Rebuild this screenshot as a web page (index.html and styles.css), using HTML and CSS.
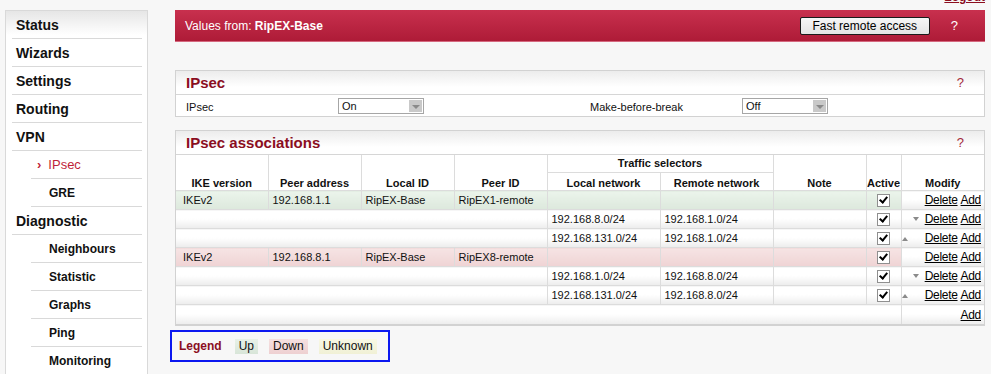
FILE: index.html
```html
<!DOCTYPE html>
<html>
<head>
    <title>IPsec</title>
    <link rel="stylesheet" href="styles.css">
</head>
<body>
<div class="page">
    <div class="menu">
        <div class="menu-item">Status</div>
        <div class="menu-item">Wizards</div>
        <div class="menu-item">Settings</div>
        <div class="menu-item">Routing</div>
        <div class="menu-item">VPN</div>
        <div class="menu-item sub active"><span class="chev">&#8250;</span>IPsec</div>
        <div class="menu-item sub">GRE</div>
        <div class="menu-item">Diagnostic</div>
        <div class="menu-item sub">Neighbours</div>
        <div class="menu-item sub">Statistic</div>
        <div class="menu-item sub">Graphs</div>
        <div class="menu-item sub">Ping</div>
        <div class="menu-item sub">Monitoring</div>
    </div>

    <div class="main">
        <div class="logout-row"><a class="logout" href="#">Logout</a></div>

        <div class="topbar">
            <span class="values">Values from: <b>RipEX-Base</b></span>
            <button class="fast-btn">Fast remote access</button>
            <span class="help-white">?</span>
        </div>

        <div class="panel first">
            <div class="panel-head">
                <span class="panel-title">IPsec</span>
                <span class="help">?</span>
            </div>
            <div class="form-row">
                <label>IPsec</label>
                <div class="select"><span>On</span><span class="sel-arrow"></span></div>
                <label>Make-before-break</label>
                <div class="select"><span>Off</span><span class="sel-arrow"></span></div>
            </div>
        </div>

        <div class="panel">
            <div class="panel-head">
                <span class="panel-title">IPsec associations</span>
                <span class="help">?</span>
            </div>
            <table class="assoc">
                <colgroup>
                    <col style="width:92px">
                    <col style="width:93px">
                    <col style="width:93px">
                    <col style="width:93px">
                    <col style="width:113px">
                    <col style="width:113px">
                    <col style="width:93px">
                    <col style="width:35px">
                    <col style="width:83px">
                </colgroup>
                <tr class="head">
                    <th rowspan="2">IKE version</th>
                    <th rowspan="2">Peer address</th>
                    <th rowspan="2">Local ID</th>
                    <th rowspan="2">Peer ID</th>
                    <th colspan="2" class="mid">Traffic selectors</th>
                    <th rowspan="2">Note</th>
                    <th rowspan="2">Active</th>
                    <th rowspan="2">Modify</th>
                </tr>
                <tr class="head">
                    <th>Local network</th>
                    <th>Remote network</th>
                </tr>
                <tr class="up">
                    <td class="first-col">IKEv2</td>
                    <td>192.168.1.1</td>
                    <td>RipEX-Base</td>
                    <td>RipEX1-remote</td>
                    <td></td>
                    <td></td>
                    <td></td>
                    <td class="act"><span class="cb"></span></td>
                    <td class="mod"><div class="mod-in"><a href="#">Delete</a> <a href="#">Add</a></div></td>
                </tr>
                <tr>
                    <td colspan="4"></td>
                    <td>192.168.8.0/24</td>
                    <td>192.168.1.0/24</td>
                    <td></td>
                    <td class="act"><span class="cb"></span></td>
                    <td class="mod"><div class="mod-in"><span class="arrow down"></span><a href="#">Delete</a> <a href="#">Add</a></div></td>
                </tr>
                <tr>
                    <td colspan="4"></td>
                    <td>192.168.131.0/24</td>
                    <td>192.168.1.0/24</td>
                    <td></td>
                    <td class="act"><span class="cb"></span></td>
                    <td class="mod"><div class="mod-in"><span class="arrow up"></span><a href="#">Delete</a> <a href="#">Add</a></div></td>
                </tr>
                <tr class="down">
                    <td class="first-col">IKEv2</td>
                    <td>192.168.8.1</td>
                    <td>RipEX-Base</td>
                    <td>RipEX8-remote</td>
                    <td></td>
                    <td></td>
                    <td></td>
                    <td class="act"><span class="cb"></span></td>
                    <td class="mod"><div class="mod-in"><a href="#">Delete</a> <a href="#">Add</a></div></td>
                </tr>
                <tr>
                    <td colspan="4"></td>
                    <td>192.168.1.0/24</td>
                    <td>192.168.8.0/24</td>
                    <td></td>
                    <td class="act"><span class="cb"></span></td>
                    <td class="mod"><div class="mod-in"><span class="arrow down"></span><a href="#">Delete</a> <a href="#">Add</a></div></td>
                </tr>
                <tr>
                    <td colspan="4"></td>
                    <td>192.168.131.0/24</td>
                    <td>192.168.8.0/24</td>
                    <td></td>
                    <td class="act"><span class="cb"></span></td>
                    <td class="mod"><div class="mod-in"><span class="arrow up"></span><a href="#">Delete</a> <a href="#">Add</a></div></td>
                </tr>
                <tr class="add-row">
                    <td colspan="8"></td>
                    <td class="mod"><div class="mod-in"><a href="#">Add</a></div></td>
                </tr>
            </table>
        </div>

        <div class="legend">
            <span class="legend-title">Legend</span>
            <span class="chip chip-up">Up</span>
            <span class="chip chip-down">Down</span>
            <span class="chip chip-unknown">Unknown</span>
        </div>
    </div>
</div>
</body>
</html>
```

FILE: styles.css
```css
html, body {
    overflow: hidden;
}
body {
    margin: 0;
    background: #f7f7f7;
    font-family: "Liberation Sans", Arial, sans-serif;
    font-size: 12px;
    color: #111;
}
.page {
    display: flex;
    align-items: flex-start;
    height: 374px;
    overflow: hidden;
}

/* left menu */
.menu {
    width: 130px;
    height: 363px;
    overflow: hidden;
    margin: 10px 0 0 5px;
    padding: 0 5px 0 6px;
    border: 1px solid #d9d9d9;
    border-bottom: none;
    background: linear-gradient(#e6e6e6, #fff 24px);
}
.menu-item {
    display: flex;
    align-items: center;
    height: 27px;
    padding-left: 4px;
    border-bottom: 1px solid #d9d9d9;
    font-size: 14px;
    font-weight: bold;
    color: #111;
}
.menu-item.sub {
    margin-left: 19px;
    padding-left: 18px;
    font-size: 12px;
}
.menu-item.active {
    color: #c01f3a;
    font-weight: normal;
    font-size: 13px;
}
.chev {
    margin-left: -12px;
    margin-right: 7px;
    font-weight: bold;
    font-size: 13px;
}

/* main column */
.main {
    width: 810px;
    margin-left: 27px;
}
.logout-row {
    display: flex;
    justify-content: flex-end;
    height: 10px;
}
.logout {
    margin-top: -10px;
    line-height: 14px;
    font-weight: bold;
    color: #8b0e1f;
}
.topbar {
    display: flex;
    align-items: center;
    height: 31px;
    padding: 0 27px 0 10px;
    border-bottom: 1px solid #d5687f;
    background: linear-gradient(#c8304e, #ae1b37);
    color: #fff;
}
.values {
    flex: 1;
}
.fast-btn {
    width: 130px;
    height: 18px;
    padding: 0;
    border: 1px solid #1a1a1a;
    border-radius: 2px;
    background: linear-gradient(#f6f6f6, #e4e4e4);
    font-family: "Liberation Sans", Arial, sans-serif;
    font-size: 12px;
    color: #000;
}
.help-white {
    margin-left: 21px;
    font-size: 13px;
}

/* panels */
.panel {
    margin-top: 13px;
    border: 1px solid #d2d2d2;
    border-bottom-width: 2px;
    background: #fff;
}
.panel.first {
    margin-top: 28px;
    border-bottom-width: 1px;
}
.panel-head {
    display: flex;
    align-items: center;
    justify-content: space-between;
    height: 23px;
    padding: 0 20px 0 10px;
    border-bottom: 1px solid #d6d6d6;
    background: linear-gradient(#ececec, #fff 16px);
}
.panel-title {
    font-size: 15px;
    font-weight: bold;
    color: #8b0e1f;
}
.help {
    color: #a3283b;
    font-size: 13px;
}
.form-row {
    display: grid;
    grid-template-columns: 152px 252px 152px 86px;
    align-items: center;
    height: 21px;
    padding-left: 10px;
    font-size: 11px;
}
.form-row label {
    padding-top: 2px;
}
.select {
    display: flex;
    justify-content: space-between;
    width: 84px;
    height: 14px;
    border: 1px solid #a6a6a6;
    background: #fff;
    line-height: 14px;
}
.select span:first-child {
    padding-left: 3px;
}
.sel-arrow {
    width: 13px;
    margin: 1px;
    background: #c9c9c9;
    position: relative;
}
.sel-arrow::after {
    content: "";
    position: absolute;
    left: 3px;
    top: 5px;
    border-left: 4px solid transparent;
    border-right: 4px solid transparent;
    border-top: 4px solid #8a8a8a;
}

/* associations table */
.assoc {
    width: 100%;
    border-collapse: collapse;
    border-style: hidden;
    table-layout: fixed;
    font-size: 11px;
}
.assoc th, .assoc td {
    border: 1px solid #dcdcdc;
    padding: 0 4px;
    white-space: nowrap;
    overflow: hidden;
}
.assoc th {
    height: 16px;
    padding: 0 0 1px 0;
    font-weight: bold;
    text-align: center;
    vertical-align: bottom;
    background: #fff;
}
.assoc th.mid {
    vertical-align: middle;
}
.assoc td {
    height: 18px;
    background: linear-gradient(#fff, #fff 45%, #ececec);
}
.assoc td.first-col {
    padding-left: 7px;
}
.assoc tr.up td {
    background: linear-gradient(#ebf4eb, #dce8dc);
}
.assoc tr.down td {
    background: linear-gradient(#f6e4e4, #efd3d4);
}
.assoc tr.add-row td {
    height: 19px;
}
.assoc td.mod, .assoc tr.up td.mod, .assoc tr.down td.mod {
    padding: 0 3px 0 0;
    background: linear-gradient(#fff, #fff 45%, #ececec);
    font-size: 12px;
}
.assoc td.act {
    text-align: center;
    padding: 0;
}
.cb {
    display: inline-block;
    width: 11px;
    height: 11px;
    border: 1px solid #8f8f8f;
    background: #fff;
    vertical-align: middle;
    position: relative;
}
.cb::after {
    content: "";
    position: absolute;
    left: 3px;
    top: 0px;
    width: 3px;
    height: 6px;
    border-right: 2px solid #000;
    border-bottom: 2px solid #000;
    transform: rotate(40deg);
}
.mod-in {
    display: flex;
    justify-content: flex-end;
    align-items: center;
}
.mod-in a {
    color: #000;
    margin-left: 3px;
    letter-spacing: -0.3px;
}
.arrow {
    align-self: flex-start;
    margin-top: 5px;
    border-left: 3px solid transparent;
    border-right: 3px solid transparent;
}
.arrow.down {
    border-top: 4px solid #8a8a8a;
    margin-right: 3px;
}
.arrow.up {
    border-bottom: 4px solid #8a8a8a;
    margin-top: 6px;
    margin-right: 14px;
}

/* legend */
.legend {
    display: flex;
    align-items: center;
    width: 209px;
    height: 28px;
    margin: 4px 0 0 -5px;
    padding-left: 7px;
    border: 2px solid #0b18f0;
}
.legend-title {
    margin-right: 13px;
    font-weight: bold;
    color: #8b0e1f;
}
.chip {
    margin-right: 11px;
    padding: 1px 4px;
    font-size: 12px;
    line-height: 13px;
}
.chip-up {
    background: linear-gradient(#e8f1e8, #d8e5d8);
}
.chip-down {
    background: linear-gradient(#f5e0e0, #eed0d1);
}
.chip-unknown {
    background: linear-gradient(#f8f8e4, #f1f1d6);
}
```
